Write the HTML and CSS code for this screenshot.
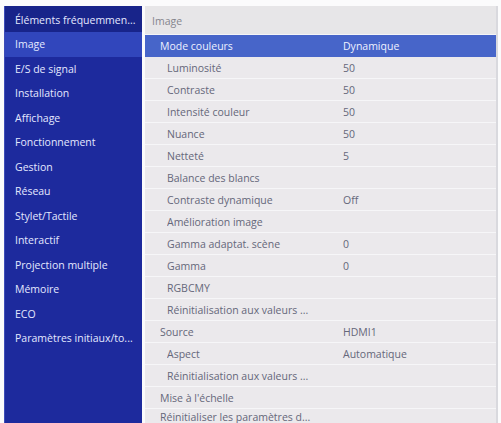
FILE: index.html
```html
<!DOCTYPE html>
<html lang="fr">
<head>
    <meta charset="UTF-8">
    <meta name="viewport" content="width=device-width, initial-scale=1.0">
    <title>Menu Image</title>
    <link rel="stylesheet" href="styles.css">
</head>
<body>
    <div class="screen">
        <!-- Menu principal -->
        <ul class="sidebar">
            <li class="side-top">Éléments fréquemmen...</li>
            <li class="active">Image</li>
            <li>E/S de signal</li>
            <li>Installation</li>
            <li>Affichage</li>
            <li>Fonctionnement</li>
            <li>Gestion</li>
            <li>Réseau</li>
            <li>Stylet/Tactile</li>
            <li>Interactif</li>
            <li>Projection multiple</li>
            <li>Mémoire</li>
            <li>ECO</li>
            <li>Paramètres initiaux/to...</li>
        </ul>

        <!-- Sous-menu Image -->
        <div class="panel">
            <div class="panel-title">Image</div>
            <div class="row selected"><span class="label">Mode couleurs</span><span class="value">Dynamique</span></div>
            <div class="row sub"><span class="label">Luminosité</span><span class="value">50</span></div>
            <div class="row sub"><span class="label">Contraste</span><span class="value">50</span></div>
            <div class="row sub"><span class="label">Intensité couleur</span><span class="value">50</span></div>
            <div class="row sub"><span class="label">Nuance</span><span class="value">50</span></div>
            <div class="row sub"><span class="label">Netteté</span><span class="value">5</span></div>
            <div class="row sub"><span class="label">Balance des blancs</span><span class="value"></span></div>
            <div class="row sub"><span class="label">Contraste dynamique</span><span class="value">Off</span></div>
            <div class="row sub"><span class="label">Amélioration image</span><span class="value"></span></div>
            <div class="row sub"><span class="label">Gamma adaptat. scène</span><span class="value">0</span></div>
            <div class="row sub"><span class="label">Gamma</span><span class="value">0</span></div>
            <div class="row sub"><span class="label">RGBCMY</span><span class="value"></span></div>
            <div class="row sub"><span class="label">Réinitialisation aux valeurs ...</span><span class="value"></span></div>
            <div class="row"><span class="label">Source</span><span class="value">HDMI1</span></div>
            <div class="row sub"><span class="label">Aspect</span><span class="value">Automatique</span></div>
            <div class="row sub"><span class="label">Réinitialisation aux valeurs ...</span><span class="value"></span></div>
            <div class="row"><span class="label">Mise à l'échelle</span><span class="value"></span></div>
            <div class="row last"><span class="label">Réinitialiser les paramètres d...</span><span class="value"></span></div>
        </div>
    </div>
</body>
</html>
```

FILE: styles.css
```css
* {
    margin: 0;
    padding: 0;
    box-sizing: border-box;
}

body {
    background: #fbfbfc;
    font-family: 'Open Sans', 'Noto Sans', sans-serif;
    font-size: 10.5px;
    overflow: hidden;
}

.screen {
    display: flex;
    gap: 3px;
    height: 423px;
    padding: 6px 3px 0 4px;
}

/* colonne bleue de gauche */
.sidebar {
    list-style: none;
    width: 138px;
    background: #1d2a9d;
    border-left: 1px solid #3d4cb8;
    color: #e4e8ff;
}

.sidebar li {
    height: 24.5px;
    display: flex;
    align-items: center;
    padding-left: 10px;
    white-space: nowrap;
    overflow: hidden;
}

.sidebar .side-top {
    height: 26px;
    background: #18248a;
    padding-top: 2px;
}

.sidebar .active {
    background: #3146bc;
}

/* panneau gris de droite */
.panel {
    flex: 1;
    background: #ebe9ec;
    border-right: 2px solid #d9d9de;
    color: #65677a;
    overflow: hidden;
}

.panel-title {
    height: 29px;
    display: flex;
    align-items: center;
    padding-left: 7px;
    padding-top: 2px;
    color: #85858d;
    background: #e7e6e8;
    border-bottom: 1px solid #f5f5f7;
}

.row {
    height: 22px;
    display: flex;
    align-items: center;
    padding-left: 15px;
    border-bottom: 1px solid #f6f6f8;
    white-space: nowrap;
}

.row.sub {
    padding-left: 22px;
}

.row.last {
    height: 16px;
    align-items: flex-end;
}

.row .label {
    width: 183px;
    overflow: hidden;
}

.row.sub .label {
    width: 176px;
}

.row.selected {
    background: #4765c9;
    color: #eef1ff;
    border-bottom-color: #4765c9;
}
```
